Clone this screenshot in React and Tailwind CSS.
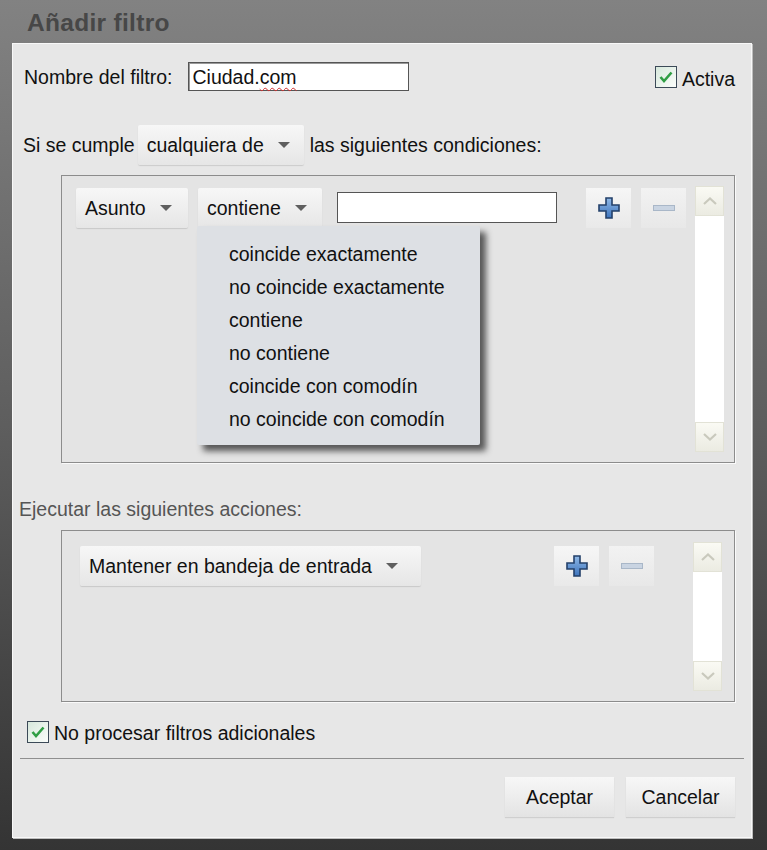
import React from 'react';

const font = { fontFamily: '"Liberation Sans", Arial, sans-serif' };

// flechita del desplegable
function Caret() {
  return (
    <svg width="12" height="6" viewBox="0 0 12 6" className="ml-[14px] shrink-0">
      <path d="M0 0 L12 0 L6 6 Z" fill="#5f5f5f" />
    </svg>
  );
}

function DropButton({ label, className = '' }) {
  return (
    <div
      className={
        'flex h-[40px] items-center rounded-[2px] bg-gradient-to-b from-[#f7f7f7] to-[#e6e6e6] px-[9px] text-[19.5px] text-[#111] shadow-[0_1px_1px_rgba(0,0,0,0.12)] ' +
        className
      }
    >
      <span>{label}</span>
      <Caret />
    </div>
  );
}

function Check() {
  return (
    <div className="flex h-[22px] w-[22px] shrink-0 items-center justify-center border border-[#3c4a58] bg-gradient-to-br from-[#d7e8dc] to-[#fbfdfb]">
      <svg width="14" height="12" viewBox="0 0 14 12">
        <path d="M1.5 6 L5 10 L12.5 1.5" fill="none" stroke="#2f9e44" strokeWidth="2.6" />
      </svg>
    </div>
  );
}

function PlusBtn() {
  return (
    <div className="flex h-[40px] w-[45px] items-center justify-center bg-gradient-to-b from-[#f6f6f6] to-[#e9e9e9]">
      <svg width="22" height="22" viewBox="0 0 22 22">
        <defs>
          <linearGradient id="pg" x1="0" y1="0" x2="0" y2="1">
            <stop offset="0" stopColor="#8fb8e6" />
            <stop offset="1" stopColor="#3d74bd" />
          </linearGradient>
        </defs>
        <path
          d="M8 1 H14 V8 H21 V14 H14 V21 H8 V14 H1 V8 H8 Z"
          fill="url(#pg)"
          stroke="#23406a"
          strokeWidth="1.6"
        />
      </svg>
    </div>
  );
}

function MinusBtn() {
  return (
    <div className="flex h-[40px] w-[45px] items-center justify-center bg-gradient-to-b from-[#f2f2f2] to-[#e8e8e8]">
      <div className="h-[6px] w-[22px] border border-[#a9b7c8] bg-[#c9d4e2]" />
    </div>
  );
}

function ScrollBar({ className = '' }) {
  return (
    <div className={'flex w-[29px] flex-col justify-between bg-white ' + className}>
      <div className="flex h-[30px] items-center justify-center border border-[#e2e2d6] bg-gradient-to-b from-[#fafaf4] to-[#ebebe2]">
        <svg width="14" height="8" viewBox="0 0 14 8">
          <path d="M1 7 L7 1.5 L13 7" fill="none" stroke="#c9c9bd" strokeWidth="2.2" />
        </svg>
      </div>
      <div className="flex h-[30px] items-center justify-center border border-[#e2e2d6] bg-gradient-to-b from-[#fafaf4] to-[#ebebe2]">
        <svg width="14" height="8" viewBox="0 0 14 8">
          <path d="M1 1 L7 6.5 L13 1" fill="none" stroke="#c9c9bd" strokeWidth="2.2" />
        </svg>
      </div>
    </div>
  );
}

const opciones = [
  'coincide exactamente',
  'no coincide exactamente',
  'contiene',
  'no contiene',
  'coincide con comodín',
  'no coincide con comodín',
];

export default function App() {
  return (
    <div
      className="flex h-[850px] w-[767px] flex-col bg-gradient-to-b from-[#828282] via-[#5e5e5e] to-[#343434] pb-[12px] pl-[12px] pr-[15px]"
      style={font}
    >
      {/* título */}
      <div className="flex h-[43px] items-center pl-[15px] pt-[4px] text-[24.5px] font-bold tracking-[0.3px] text-[#474747]">
        Añadir filtro
      </div>

      {/* panel principal */}
      <div className="flex flex-1 flex-col border border-[#f8f8f8] bg-[#e7e7e7] pr-[16px] text-[19.5px] leading-[22px] text-[#111] shadow-[1px_1px_0_#bdbdbd]">
        <div className="mt-[18px] flex h-[29px] items-center pl-[11px]">
          <span>Nombre del filtro:</span>
          <div className="ml-[16px] flex h-[29px] w-[221px] items-center border border-[#555] bg-white pl-[3px] shadow-[inset_1px_1px_0_#999]">
            Ciudad.
            <span className="underline decoration-[#d03030] decoration-wavy decoration-1 underline-offset-[3px]">
              com
            </span>
          </div>
          <div className="ml-auto flex items-center">
            <Check />
            <span className="ml-[5px] mt-[4px]">Activa</span>
          </div>
        </div>

        <div className="mt-[34px] flex items-center pl-[10px]">
          <span>Si se cumple</span>
          <DropButton label="cualquiera de" className="ml-[3px] w-[166px]" />
          <span className="ml-[6px]">las siguientes condiciones:</span>
        </div>

        {/* condiciones */}
        <div className="relative ml-[48px] mt-[10px] flex h-[288px] border border-[#8c8c8c] bg-[#e4e4e4] pb-[10px] pl-[14px] pr-[10px] pt-[10px] shadow-[1px_1px_0_#fafafa]">
          <div className="flex flex-1 items-start pt-[2px]">
            <DropButton label="Asunto" className="w-[112px]" />
            <DropButton label="contiene" className="ml-[10px] w-[124px]" />
            <div className="ml-[15px] mt-[4px] h-[31px] w-[220px] border border-[#555] bg-white" />
            <div className="ml-[29px] flex gap-[10px]">
              <PlusBtn />
              <MinusBtn />
            </div>
          </div>
          <ScrollBar className="ml-[8px] h-[266px]" />

          {/* menú desplegado */}
          <div className="absolute left-[135px] top-[50px] flex h-[219px] w-[283px] flex-col gap-[11px] rounded-[2px] bg-[#dde0e4] pl-[32px] pt-[17px] leading-[22px] shadow-[6px_6px_6px_rgba(40,40,40,0.75)]">
            {opciones.map((o) => (
              <div key={o}>{o}</div>
            ))}
          </div>
        </div>

        <div className="ml-[6px] mt-[35px] text-[#555]">Ejecutar las siguientes acciones:</div>

        {/* acciones */}
        <div className="ml-[48px] mt-[10px] flex h-[172px] border border-[#8c8c8c] bg-[#e4e4e4] pb-[10px] pl-[18px] pr-[12px] pt-[11px] shadow-[1px_1px_0_#fafafa]">
          <div className="flex flex-1 items-start pt-[4px]">
            <DropButton label="Mantener en bandeja de entrada" className="w-[341px]" />
            <div className="ml-[133px] flex gap-[10px]">
              <PlusBtn />
              <MinusBtn />
            </div>
          </div>
          <ScrollBar className="h-[149px]" />
        </div>

        <div className="ml-[14px] mt-[17px] flex items-center">
          <Check />
          <span className="ml-[5px] mt-[3px]">No procesar filtros adicionales</span>
        </div>

        <div className="ml-[7px] mr-[-9px] mt-[14px] h-[2px] border-t border-[#8f8f8f] border-b-white" />

        <div className="mt-[17px] flex justify-end gap-[12px]">
          <div className="flex h-[40px] w-[109px] items-center justify-center bg-gradient-to-b from-[#f7f7f7] to-[#e3e3e3] shadow-[0_1px_1px_rgba(0,0,0,0.1)]">
            Aceptar
          </div>
          <div className="flex h-[40px] w-[109px] items-center justify-center bg-gradient-to-b from-[#f7f7f7] to-[#e3e3e3] shadow-[0_1px_1px_rgba(0,0,0,0.1)]">
            Cancelar
          </div>
        </div>
      </div>
    </div>
  );
}
